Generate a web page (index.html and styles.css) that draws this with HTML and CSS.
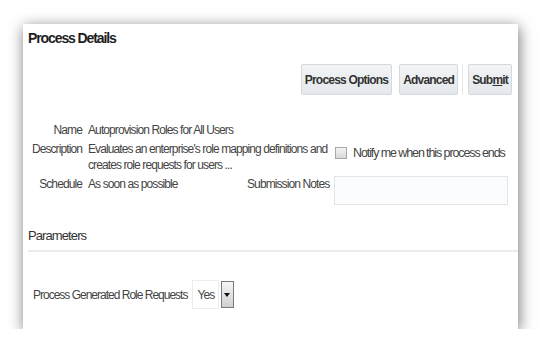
FILE: index.html
```html
<!DOCTYPE html>
<html lang="en">
<head>
  <meta charset="UTF-8">
  <title>Process Details</title>
  <link rel="stylesheet" href="styles.css">
</head>
<body>

  <div class="panel">
    <h1 class="title">Process Details</h1>

    <div class="toolbar">
      <button class="btn">Process Options</button>
      <button class="btn">Advanced</button>
      <span class="sep"></span>
      <button class="btn">Sub<u>m</u>it</button>
    </div>

    <div class="form">
      <div class="label">Name</div>
      <div class="value">Autoprovision Roles for All Users</div>
      <div></div>
      <div></div>

      <div class="label">Description</div>
      <div class="value wide">Evaluates an enterprise's role mapping definitions and creates role requests for users ...</div>
      <div class="check-cell">
        <span class="checkbox"></span>
        <span>Notify me when this process ends</span>
      </div>

      <div class="label">Schedule</div>
      <div class="value">As soon as possible</div>
      <div class="label">Submission Notes</div>
      <div class="notes"></div>
    </div>

    <div class="section-head">Parameters</div>

    <div class="param-row">
      <span class="param-label">Process Generated Role Requests</span>
      <span class="select">
        <span class="select-value">Yes</span>
        <span class="select-btn"></span>
      </span>
    </div>
  </div>

</body>
</html>
```

FILE: styles.css
```css
/* General */
body {
  margin: 0;
  background-color: #fff;
  font-family: 'Liberation Sans', Arial, sans-serif;
  font-size: 12px;
  letter-spacing: -0.9px;
  color: #333;
}

.panel {
  width: 495px;
  height: 305px;
  margin: 24px 0 0 23px;
  padding: 6px 0 0 5px;
  background-color: #fff;
  box-shadow: 1px 3px 14px rgba(0, 0, 0, 0.55);
  box-sizing: border-box;
}

.title {
  margin: 0;
  font-size: 14px;
  line-height: 16px;
  font-weight: bold;
  letter-spacing: -1.1px;
  color: #1e1e1e;
}

/* Buttons */
.toolbar {
  display: flex;
  justify-content: flex-end;
  align-items: stretch;
  margin: 18px 6px 0 0;
  height: 31px;
}

.btn {
  margin: 0 0 0 7px;
  padding: 0 3px;
  font-family: inherit;
  font-size: 12px;
  font-weight: bold;
  letter-spacing: -0.8px;
  color: #333;
  background: linear-gradient(#f2f4f6, #e4e8ec);
  border: 1px solid #d4d9de;
  border-radius: 2px;
}

.sep {
  width: 1px;
  margin-left: 4px;
  background-color: #e8e8e8;
}

.sep + .btn {
  margin-left: 5px;
}

/* Form */
.form {
  display: grid;
  grid-template-columns: 54px 153px 81px 174px;
  column-gap: 6px;
  row-gap: 3px;
  margin-top: 27px;
  line-height: 16px;
}

.label {
  text-align: right;
  white-space: nowrap;
  color: #444;
}

.value {
  white-space: nowrap;
  color: #444;
}

.wide {
  grid-column: span 2;
  white-space: normal;
}

.check-cell {
  display: flex;
  align-items: center;
  gap: 6px;
  padding: 4px 0 0 1px;
  font-size: 12.5px;
  letter-spacing: -1.1px;
  white-space: nowrap;
  color: #444;
  align-self: start;
}

.checkbox {
  flex-shrink: 0;
  width: 10px;
  height: 10px;
  border: 1px solid #a8a8a8;
  background: linear-gradient(#f4f4f4, #d8d8d8);
}

.notes {
  height: 27px;
  border: 1px solid #e2e4e6;
  background-color: #fbfcfd;
}

/* Parameters */
.section-head {
  margin-top: 23px;
  padding-bottom: 6px;
  font-size: 13px;
  line-height: 16px;
  color: #333;
  border-bottom: 2px solid #ebebeb;
}

.param-row {
  display: flex;
  align-items: center;
  margin: 28px 0 0 5px;
  color: #444;
}

.param-label {
  margin-right: 5px;
  letter-spacing: -1px;
}

.select {
  display: flex;
  align-items: stretch;
  gap: 2px;
  height: 29px;
}

.select-value {
  display: flex;
  align-items: center;
  padding: 0 4px;
  width: 17px;
  border: 1px solid #ececec;
  color: #444;
}

.select-btn {
  position: relative;
  width: 11px;
  margin: 1px 0;
  border: 1px solid #7a7a7a;
  background: linear-gradient(#f6f6f6, #cfcfcf);
}

.select-btn::after {
  content: "";
  position: absolute;
  left: 2px;
  top: 11px;
  border-left: 3.5px solid transparent;
  border-right: 3.5px solid transparent;
  border-top: 4px solid #111;
}
```
